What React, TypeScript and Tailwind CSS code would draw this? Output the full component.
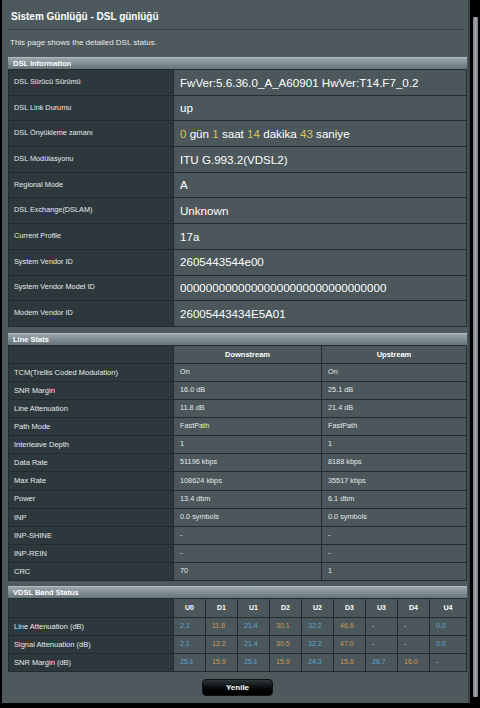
const dslInfo: [string, React.ReactNode][] = [
  ["DSL Sürücü Sürümü", "FwVer:5.6.36.0_A_A60901 HwVer:T14.F7_0.2"],
  ["DSL Link Durumu", "up"],
  [
    "DSL Önyükleme zamanı",
    <>
      <span className="text-[#d8c45e]">0</span> gün <span className="text-[#d8c45e]">1</span> saat{" "}
      <span className="text-[#d8c45e]">14</span> dakika <span className="text-[#d8c45e]">43</span> saniye
    </>,
  ],
  ["DSL Modülasyonu", "ITU G.993.2(VDSL2)"],
  ["Regional Mode", "A"],
  ["DSL Exchange(DSLAM)", "Unknown"],
  ["Current Profile", "17a"],
  ["System Vendor ID", "2605443544e00"],
  ["System Vendor Model ID", "00000000000000000000000000000000"],
  ["Modem Vendor ID", "26005443434E5A01"],
];

const lineStats: [string, string, string][] = [
  ["TCM(Trellis Coded Modulation)", "On", "On"],
  ["SNR Margin", "16.0 dB", "25.1 dB"],
  ["Line Attenuation", "11.8 dB", "21.4 dB"],
  ["Path Mode", "FastPath", "FastPath"],
  ["Interleave Depth", "1", "1"],
  ["Data Rate", "51196 kbps", "8188 kbps"],
  ["Max Rate", "108624 kbps", "35517 kbps"],
  ["Power", "13.4 dbm", "6.1 dbm"],
  ["INP", "0.0 symbols", "0.0 symbols"],
  ["INP-SHINE", "-", "-"],
  ["INP-REIN", "-", "-"],
  ["CRC", "70", "1"],
];

const bands = ["U0", "D1", "U1", "D2", "U2", "D3", "U3", "D4", "U4"];

const bandRows: [string, string[]][] = [
  ["Line Attenuation (dB)", ["2.1", "11.8", "21.4", "30.1", "32.2", "46.6", "-", "-", "0.0"]],
  ["Signal Attenuation (dB)", ["2.1", "12.2", "21.4", "30.5", "32.2", "47.0", "-", "-", "0.0"]],
  ["SNR Margin (dB)", ["25.1", "15.9", "25.1", "15.9", "24.3", "15.8", "26.7", "16.0", "-"]],
];

function SectionBar({ title }: { title: string }) {
  return (
    <div className="flex h-[12px] items-center border-t border-[#b3bdc1] bg-linear-to-b from-[#9ba7ac] to-[#66747a] pl-[5px] text-[7.5px] font-bold leading-none text-white">
      {title}
    </div>
  );
}

const labelCell = "border border-[#222b2f] bg-[#2d383c] pl-[5px] text-left align-middle font-normal text-[#e6e9ea]";
const valueCell = "border border-[#222b2f] bg-[#4b575b] pl-[6px] text-left align-middle";

export default function App() {
  return (
    <div className="flex h-[708px] w-[480px] overflow-hidden bg-black font-['Liberation_Sans',Arial,sans-serif]">
      <div className="ml-[2px] h-[703px] w-[468px] border-r-2 border-[#3b4549] bg-[#4d595d] pl-[6px]">
        <div className="pl-[3px] pt-[11px] text-[10px] font-bold leading-[12px] text-white">
          Sistem Günlüğü - DSL günlüğü
        </div>
        <div className="mr-[4px] mt-[6px] h-px bg-[#37424a]" />
        <div className="mt-[8px] pl-[2px] text-[8px] leading-[10px] text-[#e8eaea]">
          This page shows the detailed DSL status.
        </div>

        <div className="mt-[9px] w-[459px]">
          <SectionBar title="DSL Information" />
          <table className="w-full table-fixed border-collapse">
            <colgroup>
              <col className="w-[165px]" />
              <col />
            </colgroup>
            <tbody>
              {dslInfo.map(([label, value]) => (
                <tr key={label} className="h-[25.7px]">
                  <th className={`${labelCell} text-[7.3px]`}>{label}</th>
                  <td className={`${valueCell} text-[11.6px] text-white`}>{value}</td>
                </tr>
              ))}
            </tbody>
          </table>
        </div>

        <div className="mt-[6px] w-[459px]">
          <SectionBar title="Line Stats" />
          <table className="w-full table-fixed border-collapse">
            <colgroup>
              <col className="w-[165px]" />
              <col className="w-[148px]" />
              <col />
            </colgroup>
            <tbody>
              <tr className="h-[18px]">
                <th className={labelCell} />
                <th className="border border-[#222b2f] bg-[#4b575b] text-center text-[7.5px] font-bold text-white">
                  Downstream
                </th>
                <th className="border border-[#222b2f] bg-[#4b575b] text-center text-[7.5px] font-bold text-white">
                  Upstream
                </th>
              </tr>
              {lineStats.map(([label, down, up]) => (
                <tr key={label} className="h-[18.1px]">
                  <th className={`${labelCell} text-[7.5px]`}>{label}</th>
                  <td className={`${valueCell} text-[7.3px] text-[#e4e7e8]`}>{down}</td>
                  <td className={`${valueCell} text-[7.3px] text-[#e4e7e8]`}>{up}</td>
                </tr>
              ))}
            </tbody>
          </table>
        </div>

        <div className="mt-[5px] w-[459px]">
          <SectionBar title="VDSL Band Status" />
          <table className="w-full table-fixed border-collapse">
            <colgroup>
              <col className="w-[165px]" />
              {bands.map((b) => (
                <col key={b} className={b === "U4" ? "" : "w-[32px]"} />
              ))}
            </colgroup>
            <tbody>
              <tr className="h-[19px]">
                <th className={labelCell} />
                {bands.map((b) => (
                  <th
                    key={b}
                    className="border border-[#222b2f] bg-[#4b575b] text-center text-[7px] font-bold text-white"
                  >
                    {b}
                  </th>
                ))}
              </tr>
              {bandRows.map(([label, vals]) => (
                <tr key={label} className="h-[18px]">
                  <th className={`${labelCell} text-[7.5px]`}>{label}</th>
                  {vals.map((v, i) => (
                    <td
                      key={i}
                      className={`${valueCell} text-[7px] ${
                        v === "-" ? "text-[#c9cdcf]" : i % 2 === 0 ? "text-[#5aa8d6]" : "text-[#cf9a55]"
                      }`}
                    >
                      {v}
                    </td>
                  ))}
                </tr>
              ))}
            </tbody>
          </table>
        </div>

        <div className="mt-[7px] flex w-[459px] justify-center">
          <button className="h-[17px] w-[71px] rounded-[4px] border border-[#111] bg-linear-to-b from-[#2e363a] to-black text-[8px] font-bold leading-none text-white">
            Yenile
          </button>
        </div>
      </div>

      <div className="flex w-[10px] flex-col pl-[3px] pt-[17px]">
        <div className="h-[680px] w-[5px] rounded-[1px] bg-linear-to-r from-[#7a7e82] via-[#a2a6a9] to-[#7a7e82]" />
      </div>
    </div>
  );
}
